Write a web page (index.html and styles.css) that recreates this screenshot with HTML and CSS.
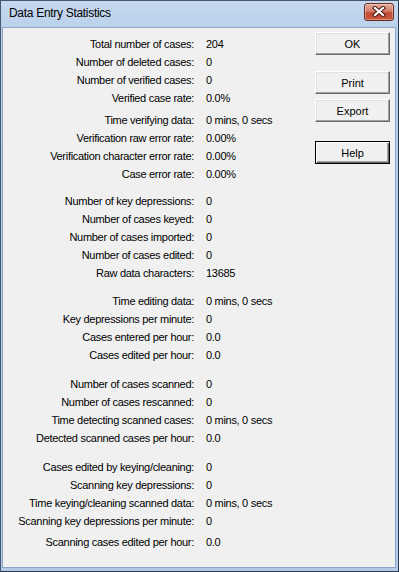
FILE: index.html
```html
<!DOCTYPE html>
<html>
<head>
<meta charset="utf-8">
<link rel="stylesheet" href="styles.css">
</head>
<body>
<div class="window">
  <div class="titlebar">
    <span class="title">Data Entry Statistics</span>
    <button class="close" aria-label="Close">
      <svg width="14" height="11" viewBox="0 0 14 11">
        <path d="M3 2 L11 9 M11 2 L3 9" stroke="#4a1a12" stroke-width="4.2" stroke-linecap="square" fill="none"/>
        <path d="M3 2 L11 9 M11 2 L3 9" stroke="#ffffff" stroke-width="2.2" stroke-linecap="square" fill="none"/>
      </svg>
    </button>
  </div>
  <div class="client">
    <div class="stats">
      <div class="group">
        <span class="lbl">Total number of cases:</span><span class="val">204</span>
        <span class="lbl">Number of deleted cases:</span><span class="val">0</span>
        <span class="lbl">Number of verified cases:</span><span class="val">0</span>
        <span class="lbl">Verified case rate:</span><span class="val">0.0%</span>
      </div>
      <div class="group g2">
        <span class="lbl">Time verifying data:</span><span class="val">0 mins, 0 secs</span>
        <span class="lbl">Verification raw error rate:</span><span class="val">0.00%</span>
        <span class="lbl">Verification character error rate:</span><span class="val">0.00%</span>
        <span class="lbl">Case error rate:</span><span class="val">0.00%</span>
      </div>
      <div class="group g3">
        <span class="lbl">Number of key depressions:</span><span class="val">0</span>
        <span class="lbl">Number of cases keyed:</span><span class="val">0</span>
        <span class="lbl">Number of cases imported:</span><span class="val">0</span>
        <span class="lbl">Number of cases edited:</span><span class="val">0</span>
        <span class="lbl">Raw data characters:</span><span class="val">13685</span>
      </div>
      <div class="group g4">
        <span class="lbl">Time editing data:</span><span class="val">0 mins, 0 secs</span>
        <span class="lbl">Key depressions per minute:</span><span class="val">0</span>
        <span class="lbl">Cases entered per hour:</span><span class="val">0.0</span>
        <span class="lbl">Cases edited per hour:</span><span class="val">0.0</span>
      </div>
      <div class="group g5">
        <span class="lbl">Number of cases scanned:</span><span class="val">0</span>
        <span class="lbl">Number of cases rescanned:</span><span class="val">0</span>
        <span class="lbl">Time detecting scanned cases:</span><span class="val">0 mins, 0 secs</span>
        <span class="lbl">Detected scanned cases per hour:</span><span class="val">0.0</span>
      </div>
      <div class="group g6">
        <span class="lbl">Cases edited by keying/cleaning:</span><span class="val">0</span>
        <span class="lbl">Scanning key depressions:</span><span class="val">0</span>
        <span class="lbl">Time keying/cleaning scanned data:</span><span class="val">0 mins, 0 secs</span>
        <span class="lbl">Scanning key depressions per minute:</span><span class="val">0</span>
      </div>
      <div class="group g7">
        <span class="lbl">Scanning cases edited per hour:</span><span class="val">0.0</span>
      </div>
    </div>
    <div class="buttons">
      <button class="btn">OK</button>
      <button class="btn b-print">Print</button>
      <button class="btn b-export">Export</button>
      <button class="btn b-help">Help</button>
    </div>
  </div>
</div>
</body>
</html>
```
FILE: styles.css
```css
html, body {
  margin: 0;
  padding: 0;
  background: #b9d1ea;
}
body {
  width: 399px;
  height: 572px;
  overflow: hidden;
}
.window {
  box-sizing: border-box;
  width: 399px;
  height: 572px;
  border: 1px solid #44576e;
  border-right-color: #2a3a4c;
  border-bottom-color: #2a3a4c;
  background: linear-gradient(#c5d8ee, #b6cde9 40px, #b3cbe8);
  display: flex;
  flex-direction: column;
  padding: 0 2px 3px 1px;
}
.titlebar {
  height: 26px;
  flex: none;
  display: flex;
  align-items: center;
  justify-content: space-between;
  padding-left: 7px;
}
.title {
  font-family: "Liberation Sans", Arial, sans-serif;
  font-size: 12px;
  letter-spacing: -0.3px;
  color: #000;
  padding-bottom: 2px;
}
.close {
  box-sizing: border-box;
  width: 30px;
  height: 18px;
  margin-right: 2px;
  margin-bottom: 5px;
  border: 1px solid #6b2a20;
  border-radius: 3px;
  background: linear-gradient(#e6a999, #d47e6b 45%, #c24a33 55%, #c9583e);
  box-shadow: inset 0 0 0 1px rgba(255,255,255,0.35);
  display: flex;
  align-items: center;
  justify-content: center;
  padding: 0;
}
.close svg { display: block; }
.client {
  flex: 1;
  background: #f0f0f0;
  border: 1px solid #8aa6c6;
  display: flex;
  font-family: "Liberation Sans", Arial, sans-serif;
  font-size: 11px;
  letter-spacing: -0.3px;
  color: #000;
}
.stats {
  padding-top: 7px;
  flex: none;
}
.group {
  display: grid;
  grid-template-columns: 191px auto;
  column-gap: 12px;
  grid-auto-rows: 18px;
  line-height: 18px;
}
.lbl { justify-self: end; white-space: nowrap; }
.val { white-space: nowrap; }
.g2 { margin-top: 4px; }
.g3 { margin-top: 9px; }
.g4 { margin-top: 10px; }
.g5 { margin-top: 11px; }
.g6 { margin-top: 11px; }
.g7 { margin-top: 3px; }
.buttons {
  margin-left: auto;
  margin-right: 5px;
  padding-top: 4px;
  display: flex;
  flex-direction: column;
  width: 75px;
}
.btn {
  box-sizing: border-box;
  width: 75px;
  height: 23px;
  padding: 0;
  background: #f0f0f0;
  font-family: "Liberation Sans", Arial, sans-serif;
  font-size: 11px;
  color: #000;
  border: 1px solid;
  border-color: #ffffff #696969 #696969 #ffffff;
  box-shadow: inset -1px -1px 0 #a0a0a0, inset 1px 1px 0 #e3e3e3;
}
.b-print { margin-top: 16px; }
.b-export { margin-top: 5px; }
.b-help {
  margin-top: 19px;
  border: 1px solid #000;
  box-shadow: inset 1px 1px 0 #ffffff, inset -1px -1px 0 #696969, inset -2px -2px 0 #a0a0a0;
}
```
